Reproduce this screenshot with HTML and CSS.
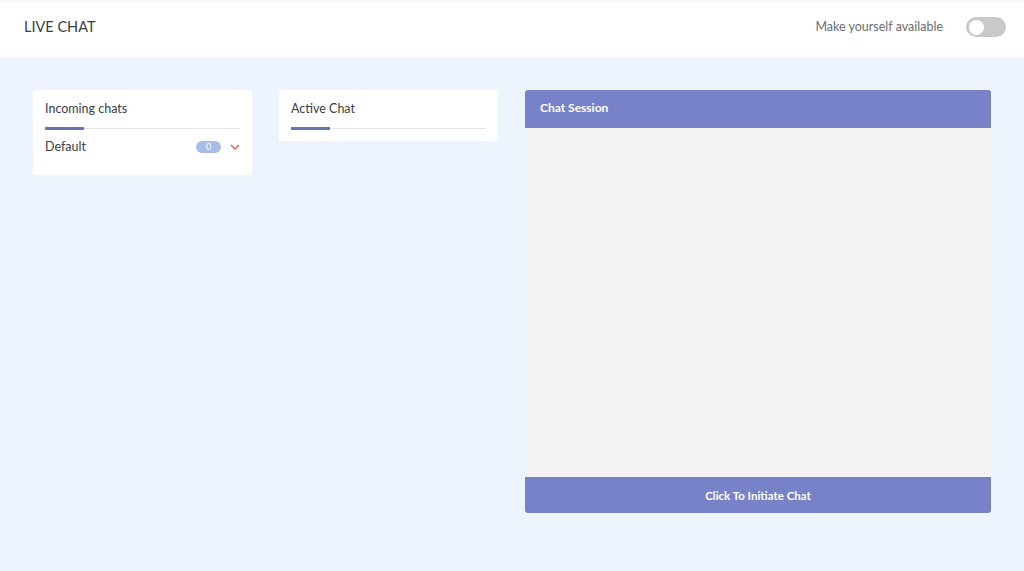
FILE: index.html
```html
<!DOCTYPE html>
<html lang="en">
<head>
    <meta charset="UTF-8">
    <meta name="viewport" content="width=device-width, initial-scale=1.0">
    <title>Live Chat</title>
    <link rel="stylesheet" href="styles.css">
</head>
<body>
    <header class="topbar">
        <div class="brand">LIVE CHAT</div>
        <div class="availability">
            <span>Make yourself available</span>
            <span class="switch"><span class="knob"></span></span>
        </div>
    </header>

    <main class="board">
        <section class="card">
            <h2 class="card-title">Incoming chats</h2>
            <div class="tab-line"><span></span></div>
            <div class="queue-row">
                <span>Default</span>
                <span class="queue-meta">
                    <span class="count">0</span>
                    <svg class="chevron" width="10" height="6" viewBox="0 0 10 6"><path d="M1 1 L5 5 L9 1" fill="none" stroke="#e05a5a" stroke-width="1.3"/></svg>
                </span>
            </div>
        </section>

        <section class="card card-short">
            <h2 class="card-title">Active Chat</h2>
            <div class="tab-line"><span></span></div>
        </section>

        <section class="session">
            <div class="session-head">Chat Session</div>
            <div class="session-body"></div>
            <button class="initiate">Click To Initiate Chat</button>
        </section>
    </main>
</body>
</html>
```

FILE: styles.css
```css
body {
    margin: 0;
    padding: 0;
    font-family: 'Lato', 'Noto Sans', sans-serif;
    background-color: #eef4fd;
    color: #333;
    min-height: 571px;
}

.topbar {
    background-color: #fff;
    border-top: 2px solid #f6f7f9;
    display: flex;
    align-items: center;
    justify-content: space-between;
    padding: 0 18px 6px 24px;
    box-sizing: border-box;
    height: 57px;
}

.brand {
    font-size: 14.5px;
    color: #3a3d44;
}

.availability {
    display: flex;
    align-items: center;
    gap: 23px;
    font-size: 12.5px;
    color: #6a6d72;
}

.switch {
    width: 40px;
    height: 20px;
    border-radius: 10px;
    background-color: #c9c9c9;
    display: flex;
    align-items: center;
    padding: 0 3px;
    box-sizing: border-box;
    margin-top: 1px;
}

.knob {
    width: 15px;
    height: 15px;
    border-radius: 50%;
    background-color: #fff;
}

.board {
    display: grid;
    grid-template-columns: 219px 219px 1fr;
    gap: 27px;
    align-items: start;
    padding: 33px;
}

.card {
    background-color: #fff;
    padding: 11px 12px 21px;
    border-radius: 2px;
}

.card-short {
    padding-bottom: 12px;
}

.card-title {
    margin: 0;
    font-size: 12.5px;
    font-weight: normal;
    color: #3a3d44;
    line-height: 16px;
}

.tab-line {
    margin-top: 11px;
    height: 1px;
    background-color: #e4e6ea;
    position: relative;
}

.tab-line span {
    position: absolute;
    left: 0;
    top: -1px;
    width: 39px;
    height: 3px;
    background-color: #6a71b4;
}

.queue-row {
    display: flex;
    align-items: center;
    justify-content: space-between;
    margin-top: 10px;
    font-size: 12.5px;
    color: #3a3d44;
}

.queue-meta {
    display: flex;
    align-items: center;
    gap: 9px;
}

.count {
    width: 25px;
    height: 12px;
    border-radius: 6px;
    background-color: #a8bde6;
    color: #fff;
    font-size: 9px;
    line-height: 12px;
    text-align: center;
}

.session {
    display: flex;
    flex-direction: column;
}

.session-head {
    background-color: #7882c9;
    color: #fff;
    font-weight: bold;
    font-size: 12px;
    height: 38px;
    line-height: 36px;
    padding: 0 15px;
    border-radius: 3px 3px 0 0;
    box-sizing: border-box;
}

.session-body {
    background-color: #f3f3f3;
    height: 349px;
}

.initiate {
    height: 36px;
    border: none;
    border-radius: 0 0 3px 3px;
    background-color: #7882c9;
    color: #fff;
    font-family: inherit;
    font-size: 11.5px;
    font-weight: bold;
    cursor: pointer;
}
```
